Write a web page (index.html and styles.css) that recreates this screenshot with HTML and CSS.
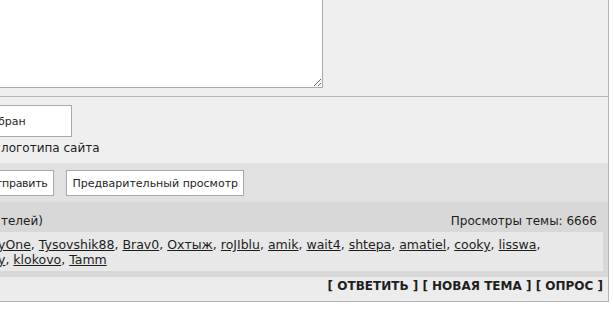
FILE: index.html
```html
<!DOCTYPE html>
<html lang="ru">
<head>
<meta charset="utf-8">
<title>Ответ в тему</title>
<link rel="stylesheet" href="styles.css">
</head>
<body>
<div class="board">
  <section class="editor">
    <textarea class="message"></textarea>
  </section>
  <section class="options">
    <input class="code" type="text" value="бран">
    <div class="hint">логотипа сайта</div>
  </section>
  <section class="buttons">
    <button class="btn first">тправить</button>
    <button class="btn">Предварительный просмотр</button>
  </section>
  <section class="stats">
    <div class="stats-head">
      <span>телей)</span>
      <span>Просмотры темы: 6666</span>
    </div>
    <div class="users">
      <a href="#">yOne</a>, <a href="#">Tysovshik88</a>, <a href="#">Brav0</a>, <a href="#">Охтыж</a>, <a href="#">roJIblu</a>, <a href="#">amik</a>, <a href="#">wait4</a>, <a href="#">shtepa</a>, <a href="#">amatiel</a>, <a href="#">cooky</a>, <a href="#">lisswa</a>,<br>
      <a href="#">y</a>, <a href="#">klokovo</a>, <a href="#">Tamm</a>
    </div>
  </section>
  <section class="actions">
    <a href="#">[ ОТВЕТИТЬ ]</a> <a href="#">[ НОВАЯ ТЕМА ]</a> <a href="#">[ ОПРОС ]</a>
  </section>
</div>
</body>
</html>
```
FILE: styles.css
```css
html, body {
  margin: 0;
  padding: 0;
  background: #ffffff;
  overflow: hidden;
}
body {
  font-family: "DejaVu Sans", Verdana, sans-serif;
  font-size: 12px;
  line-height: 15px;
  color: #1e1e1e;
}
.board {
  margin-left: -10px;
  width: 618px;
  border-right: 1px solid #b4b4b4;
}
.editor {
  background: #efefef;
  padding: 0 0 8px 0;
  border-bottom: 1px solid #b8b8b8;
}
.message {
  display: block;
  box-sizing: border-box;
  width: 333px;
  height: 88px;
  margin: 0;
  border: 1px solid #a9a9a9;
  border-top: 0;
  background: #ffffff;
  resize: both;
}
.options {
  background: #efefef;
  padding: 8px 0 7px 0;
}
.code {
  display: block;
  box-sizing: border-box;
  width: 82px;
  height: 32px;
  margin: 0 0 4px 0;
  padding: 0 0 0 7px;
  border: 1px solid #a9a9a9;
  background: #ffffff;
  font-family: "DejaVu Sans", Verdana, sans-serif;
  font-size: 11px;
  color: #1e1e1e;
}
.hint {
  padding-left: 11px;
}
.buttons {
  background: #e1e1e1;
  padding: 7px 0 6px 0;
  display: flex;
  gap: 12px;
}
.btn {
  box-sizing: border-box;
  height: 26px;
  padding: 0 5px;
  border: 1px solid #a9a9a9;
  background: #ffffff;
  font-family: "DejaVu Sans", Verdana, sans-serif;
  font-size: 11px;
  color: #1e1e1e;
  border-radius: 0;
}
.btn.first {
  padding-left: 5px;
  padding-right: 6px;
  letter-spacing: -0.3px;
}
.stats {
  background: #d8d8d8;
  padding: 12px 5px 6px 0;
}
.stats-head {
  display: flex;
  justify-content: space-between;
  padding: 0 6px 3px 11px;
}
.users {
  background: #e8e8e8;
  padding: 5px 6px 4px 8px;
  height: 30px;
  font-size: 12.5px;
}
.users a {
  color: #1e1e1e;
  text-decoration: underline;
}
.actions {
  background: #ececec;
  border-bottom: 1px solid #b4b4b4;
  padding: 2px 5px 7px 0;
  text-align: right;
  font-weight: bold;
}
.actions a {
  color: #1e1e1e;
  text-decoration: none;
}
```
